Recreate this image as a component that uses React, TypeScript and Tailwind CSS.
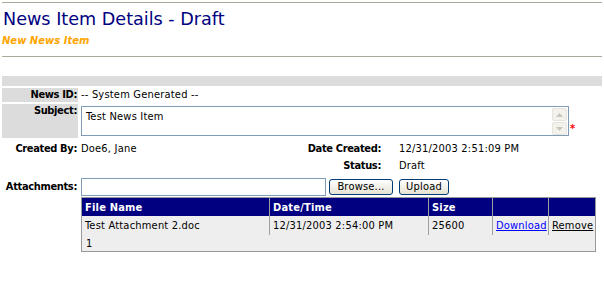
import { ReactNode } from "react";

const bodyFont = "font-[family-name:'DejaVu_Sans_Condensed',Tahoma,'Liberation_Sans',sans-serif]";

function Label({ children }: { children: ReactNode }) {
  return <div className="text-right font-bold pr-[1px] tracking-[-0.35px]">{children}</div>;
}

function XpButton({ children, width }: { children: ReactNode; width: string }) {
  return (
    <button
      className={`${width} h-[16px] mt-[1px] rounded-[3px] border border-[#003c74] bg-linear-to-b from-white to-[#e6e3d3] text-[11px] leading-[14px] text-black`}
    >
      {children}
    </button>
  );
}

export default function App() {
  const columns = ["File Name", "Date/Time", "Size", "", ""];

  return (
    <div className={`w-[604px] h-[284px] bg-white px-[2px] pt-[2px] text-[11px] leading-[13px] tracking-[0.2px] text-black ${bodyFont}`}>
      <div className="h-px bg-[#aca899]" />

      {/* title block */}
      <div className="mt-[6px] pl-[1px] font-['DejaVu_Sans',sans-serif] text-[17.6px] leading-[20px] tracking-normal text-[#000080]">
        News Item Details - Draft
      </div>
      <div className="mt-[6px] font-['DejaVu_Sans',sans-serif] text-[10px] leading-[12px] tracking-normal font-bold italic text-[#ffa500]">
        New News Item
      </div>
      <div className="mt-[9px] h-px bg-[#aca899]" />

      <div className="mt-[19px] h-[10px] bg-[#dcdcdc]" />

      {/* News ID */}
      <div className="mt-[2px] grid grid-cols-[76px_1fr] gap-x-[3px] h-[14px] leading-[14px]">
        <div className="bg-[#dcdcdc]">
          <Label>News ID:</Label>
        </div>
        <div>-- System Generated --</div>
      </div>

      {/* Subject */}
      <div className="mt-[2px] grid grid-cols-[76px_1fr] gap-x-[3px] h-[34px]">
        <div className="bg-[#dcdcdc]">
          <Label>Subject:</Label>
        </div>
        <div className="flex items-start pt-[2px]">
          <div className="flex w-[488px] h-[30px] border border-[#7f9db9] bg-white">
            <div className="flex-1 pl-[4px] pt-[3px]">Test News Item</div>
            <div className="flex flex-col gap-[1px] w-[15px] mr-[1px] mt-[1px]">
              <div className="h-[14px] rounded-[2px] border border-[#e6e4dc] bg-[#f3f2ec] flex items-center justify-center">
                <svg width="7" height="4" viewBox="0 0 7 4">
                  <path d="M3.5 0 L7 4 L0 4 Z" fill="#c9c7ba" />
                </svg>
              </div>
              <div className="h-[13px] rounded-[2px] border border-[#e6e4dc] bg-[#f3f2ec] flex items-center justify-center">
                <svg width="7" height="4" viewBox="0 0 7 4">
                  <path d="M0 0 L7 0 L3.5 4 Z" fill="#c9c7ba" />
                </svg>
              </div>
            </div>
          </div>
          <span className="ml-[1px] mt-[16px] font-bold text-[#ff0000] leading-[13px]">*</span>
        </div>
      </div>

      {/* created / status */}
      <div className="mt-[4px] grid grid-cols-[76px_216px_82px_1fr] gap-x-[3px]">
        <Label>Created By:</Label>
        <div>Doe6, Jane</div>
        <Label>Date Created:</Label>
        <div className="pl-[14px]">12/31/2003 2:51:09 PM</div>
      </div>
      <div className="mt-[4px] grid grid-cols-[76px_216px_82px_1fr] gap-x-[3px]">
        <div />
        <div />
        <Label>Status:</Label>
        <div className="pl-[14px]">Draft</div>
      </div>

      {/* attachments */}
      <div className="mt-[6px] grid grid-cols-[76px_1fr] gap-x-[3px]">
        <div className="pt-[2px]">
          <Label>Attachments:</Label>
        </div>
        <div>
          <div className="flex items-start h-[18px]">
            <div className="w-[245px] h-[18px] border border-[#7f9db9] bg-white" />
            <div className="ml-[3px]">
              <XpButton width="w-[64px]">Browse...</XpButton>
            </div>
            <div className="ml-[6px]">
              <XpButton width="w-[50px]">Upload</XpButton>
            </div>
          </div>

          <div className="mt-[1px] w-[515px] border border-[#999999] bg-[#eeeeee]">
            <div className="grid grid-cols-[187px_159px_64px_56px_47px] h-[18px] bg-[#000080] text-white font-bold">
              {columns.map((c, i) => (
                <div
                  key={i}
                  className={`flex items-center pl-[3px] ${i > 0 ? "border-l border-[#a0a0a0]" : ""}`}
                >
                  {c}
                </div>
              ))}
            </div>
            <div className="grid grid-cols-[187px_159px_64px_56px_47px] h-[19px]">
              <div className="flex items-center pl-[3px]">Test Attachment 2.doc</div>
              <div className="flex items-center pl-[3px] border-l border-[#a0a0a0]">12/31/2003 2:54:00 PM</div>
              <div className="flex items-center pl-[3px] border-l border-[#a0a0a0]">25600</div>
              <div className="flex items-center pl-[3px] border-l border-[#a0a0a0]">
                <a href="#" className="text-[#0000ff] underline">Download</a>
              </div>
              <div className="flex items-center pl-[3px] border-l border-[#a0a0a0]">
                <a href="#" className="text-black underline">Remove</a>
              </div>
            </div>
            <div className="h-[16px] flex items-center pl-[4px]">1</div>
          </div>
        </div>
      </div>
    </div>
  );
}
